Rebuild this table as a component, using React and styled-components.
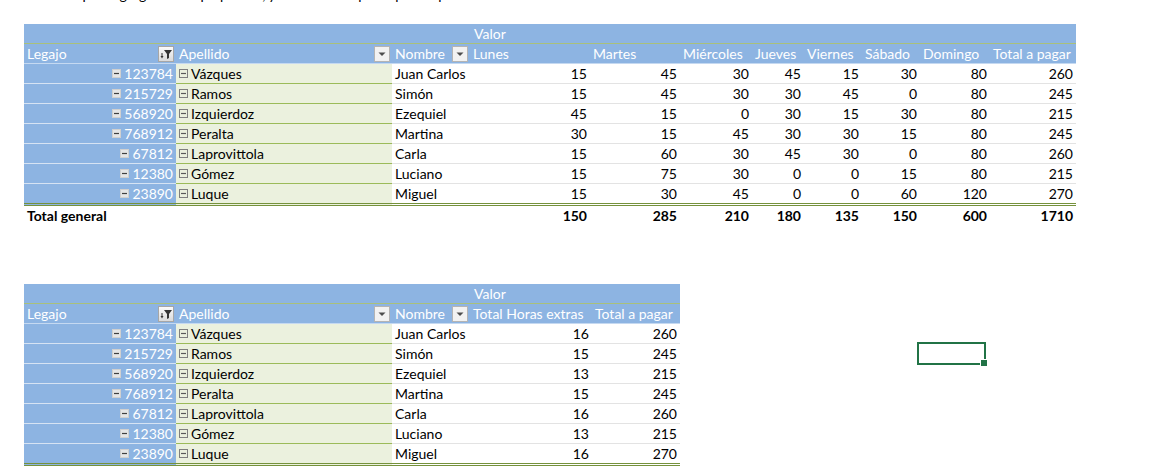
import React from "react";
import styled, { createGlobalStyle } from "styled-components";

const GlobalStyle = createGlobalStyle`
  body {
    margin: 0;
    background: #FFFFFF;
    font-family: Lato, "Open Sans", sans-serif;
    font-size: 14px;
    color: #000000;
  }
`;

const BLUE = "#8DB4E2";
const PALE_GREEN = "#EBF1DE";
const OLIVE = "#9BBB59";
const DARK_OLIVE = "#76923C";

const Sheet = styled.div`
  display: flex;
  flex-direction: column;
  align-items: flex-start;
  padding-left: 24px;
`;

const CutLine = styled.div`
  height: 4px;
  overflow: hidden;
  margin-left: 40px;
`;

const CutText = styled.div`
  margin-top: -14px;
  line-height: 17px;
  white-space: nowrap;
`;

const Pivot = styled.div`
  display: flex;
  flex-direction: column;
  width: max-content;
  margin-top: ${(p) => p.$top}px;
`;

const Row = styled.div`
  display: grid;
  grid-template-columns: ${(p) => p.$cols};
`;

const Cell = styled.div`
  display: flex;
  align-items: center;
  justify-content: ${(p) => (p.$right ? "flex-end" : "flex-start")};
  gap: 3px;
  height: ${(p) => p.$h || 20}px;
  padding: 0 3px;
  box-sizing: border-box;
  white-space: nowrap;
  overflow: hidden;
  background: ${(p) => p.$bg || "transparent"};
  color: ${(p) => p.$color || "#000000"};
  font-weight: ${(p) => (p.$bold ? 700 : 400)};
  border-bottom: ${(p) => p.$line || "none"};
  grid-column: ${(p) => p.$span || "auto"};
`;

const ValorBar = styled.div`
  display: grid;
  grid-template-columns: ${(p) => p.$cols};
  height: 20px;
  background: ${BLUE};
  border-bottom: 1px solid #A9C07A;
  box-sizing: border-box;
  color: #FFFFFF;
`;

const ValorLabel = styled.div`
  grid-column: 4 / -1;
  display: flex;
  align-items: center;
  padding-left: 4px;
`;

const HeadCell = styled.div`
  display: flex;
  align-items: center;
  justify-content: space-between;
  height: 20px;
  padding: 0 2px 0 3px;
  box-sizing: border-box;
  background: ${BLUE};
  color: #FFFFFF;
  white-space: nowrap;
  overflow: hidden;
  border-bottom: 1px solid #C5D9F1;
`;

const Canvas = styled.div`
  display: flex;
  align-items: flex-start;
`;

const Selection = styled.div`
  position: relative;
  width: 69px;
  height: 23px;
  margin: 118px 0 0 237px;
  border: 2px solid #217346;
  box-sizing: border-box;
`;

const Handle = styled.div`
  position: absolute;
  right: -4px;
  bottom: -4px;
  width: 6px;
  height: 6px;
  background: #217346;
  border: 1px solid #FFFFFF;
`;

const FilterIcon = () => (
  <svg width="16" height="16" viewBox="0 0 16 16">
    <defs>
      <linearGradient id="fg" x1="0" y1="0" x2="0" y2="1">
        <stop offset="0" stopColor="#FBFBFB" />
        <stop offset="1" stopColor="#D9D9D9" />
      </linearGradient>
    </defs>
    <rect x="0.5" y="0.5" width="15" height="15" fill="url(#fg)" stroke="#A6A6A6" />
    <path d="M6 4 H14 L11 8 V12 L9 13 V8 Z" fill="#333333" />
    <path d="M4 7 V11" stroke="#333333" strokeWidth="1" />
    <path d="M2.5 10 H5.5 L4 12.5 Z" fill="#333333" />
  </svg>
);

const DropIcon = () => (
  <svg width="16" height="16" viewBox="0 0 16 16">
    <rect x="0.5" y="0.5" width="15" height="15" fill="#F2F2F2" stroke="#B4B4B4" />
    <path d="M4.5 6.5 H11.5 L8 10 Z" fill="#4D4D4D" />
  </svg>
);

const Collapse = ({ filled }) => (
  <svg width="9" height="9" viewBox="0 0 9 9">
    <rect
      x="0.5"
      y="0.5"
      width="8"
      height="8"
      fill={filled ? "#E6E6E6" : "none"}
      stroke={filled ? "#D0D0D0" : "#7F7F7F"}
    />
    <path d="M2 4.5 H7" stroke={filled ? "#404040" : "#595959"} strokeWidth="1.2" />
  </svg>
);

const people = [
  { id: "123784", last: "Vázques", first: "Juan Carlos", days: [15, 45, 30, 45, 15, 30, 80], total: 260, extra: 16 },
  { id: "215729", last: "Ramos", first: "Simón", days: [15, 45, 30, 30, 45, 0, 80], total: 245, extra: 15 },
  { id: "568920", last: "Izquierdoz", first: "Ezequiel", days: [45, 15, 0, 30, 15, 30, 80], total: 215, extra: 13 },
  { id: "768912", last: "Peralta", first: "Martina", days: [30, 15, 45, 30, 30, 15, 80], total: 245, extra: 15 },
  { id: "67812", last: "Laprovittola", first: "Carla", days: [15, 60, 30, 45, 30, 0, 80], total: 260, extra: 16 },
  { id: "12380", last: "Gómez", first: "Luciano", days: [15, 75, 30, 0, 0, 15, 80], total: 215, extra: 13 },
  { id: "23890", last: "Luque", first: "Miguel", days: [15, 30, 45, 0, 0, 60, 120], total: 270, extra: 16 },
];

const weekCols = "152px 216px 78px 120px 90px 72px 52px 58px 58px 70px 86px";
const extraCols = "152px 216px 78px 122px 88px";
const weekHeads = ["Lunes", "Martes", "Miércoles", "Jueves", "Viernes", "Sábado", "Domingo", "Total a pagar"];

const PivotTable = ({ cols, heads, values, top, totals }) => (
  <Pivot $top={top}>
    <ValorBar $cols={cols}>
      <ValorLabel>Valor</ValorLabel>
    </ValorBar>
    <Row $cols={cols}>
      <HeadCell>
        Legajo
        <FilterIcon />
      </HeadCell>
      <HeadCell>
        Apellido
        <DropIcon />
      </HeadCell>
      <HeadCell>
        Nombre
        <DropIcon />
      </HeadCell>
      {heads.map((h) => (
        <HeadCell key={h}>{h}</HeadCell>
      ))}
    </Row>
    {people.map((p, i) => {
      const last = i === people.length - 1;
      const dbl = `3px double ${DARK_OLIVE}`;
      const h = last ? 22 : 20;
      return (
        <Row key={p.id} $cols={cols}>
          <Cell $h={h} $right $bg={BLUE} $color="#FFFFFF" $line={last ? dbl : "1px solid #D6E3F3"}>
            <Collapse filled />
            {p.id}
          </Cell>
          <Cell $h={h} $bg={PALE_GREEN} $line={last ? dbl : `1px solid ${OLIVE}`}>
            <Collapse />
            {p.last}
          </Cell>
          <Cell $h={h} $line={last ? dbl : "1px solid #E3E3E3"}>{p.first}</Cell>
          {values(p).map((v, k) => (
            <Cell key={k} $h={h} $right $line={last ? dbl : "1px solid #E3E3E3"}>
              {v}
            </Cell>
          ))}
        </Row>
      );
    })}
    {totals && (
      <Row $cols={cols}>
        <Cell $h={18} $bold $span="1 / 4">
          Total general
        </Cell>
        {totals.map((t, k) => (
          <Cell key={k} $h={18} $right $bold>
            {t}
          </Cell>
        ))}
      </Row>
    )}
  </Pivot>
);

export default function App() {
  return (
    <>
      <GlobalStyle />
      <Sheet>
        <CutLine>
          <CutText>Se pide agregar al campo pedido, y calcular el importe por empleado</CutText>
        </CutLine>
        <PivotTable
          top={20}
          cols={weekCols}
          heads={weekHeads}
          values={(p) => [...p.days, p.total]}
          totals={[150, 285, 210, 180, 135, 150, 600, 1710]}
        />
        <Canvas>
          <PivotTable
            top={60}
            cols={extraCols}
            heads={["Total Horas extras", "Total a pagar"]}
            values={(p) => [p.extra, p.total]}
          />
          <Selection>
            <Handle />
          </Selection>
        </Canvas>
      </Sheet>
    </>
  );
}
